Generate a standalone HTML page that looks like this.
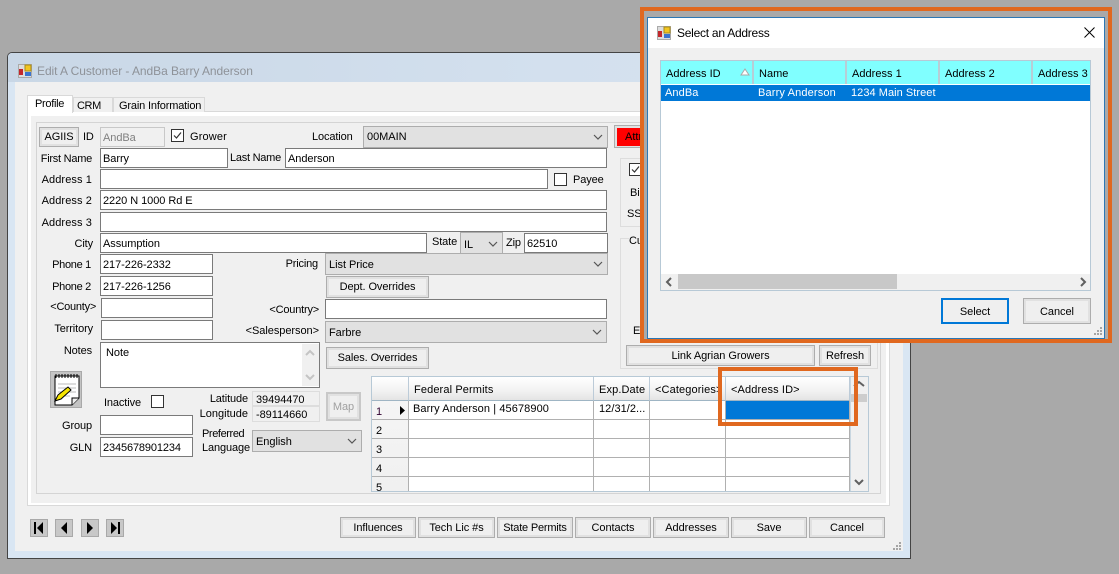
<!DOCTYPE html>
<html><head><meta charset="utf-8"><style>
html,body{margin:0;padding:0;width:1119px;height:574px;overflow:hidden;background:#a9a9a9}
*{box-sizing:border-box}
div,span{position:absolute}
body,div{font:11px "Liberation Sans",sans-serif;color:#000;letter-spacing:0;white-space:nowrap}
.l{line-height:14px;height:14px;margin-top:1px;letter-spacing:-.12px}
.r{text-align:right}
.t{background:#fff;border:1px solid #7a7a7a;padding:3px 0 0 2px;line-height:14px;letter-spacing:-.06px}
.s{background:#e1e1e1;border:1px solid #adadad;padding:4px 0 0 3px;line-height:14px;letter-spacing:-.04px}
.s svg{position:absolute;right:4px;top:7px}
.b{background:#efefef;border:1px solid #adadad;box-shadow:inset 0 0 0 2px #e1e1e1;text-align:center;line-height:21px;letter-spacing:-.06px}
.c{width:13px;height:13px;background:#fff;border:1px solid #333}
.h{background:linear-gradient(#fff,#f2f2f2 60%,#e4e4e4);border-right:1px solid #bccbd8;border-bottom:1px solid #9fb5c4;line-height:27px;padding-left:5px;letter-spacing:.12px}
.rl{background:#b0b0b0;height:1px}
.g{background:#b0b0b0}
.n{background:#c8c8c8;border:1px solid #a9a9a9;width:18px;height:18px;top:519px}
.dh{background:#80ffff;top:61px;height:23px;border-right:2px solid #b7cdd6;line-height:26px;padding-left:5px;letter-spacing:.02px}
</style></head><body>

<div style="left:7px;top:52px;width:904px;height:507px;background:#d9e6f3;border:1px solid #444;border-radius:5px 0 0 0"></div>
<div style="left:8px;top:53px;width:902px;height:29px;background:linear-gradient(90deg,#c9d7e6,#d3e0ee 60%,#d6e3f0);border-radius:4px 0 0 0"></div>
<div style="left:15px;top:82px;width:888px;height:469px;background:#f0f0f0"></div>
<svg style="position:absolute;left:18px;top:64px" width="14" height="14"><rect x=".5" y=".5" width="13" height="13" fill="#ddd" stroke="#aaa"/><rect x="7" y="1" width="6" height="6" fill="#f2c521" stroke="#a88a18"/><rect x="1" y="5" width="4" height="6" fill="#c3272b"/><rect x="7" y="8" width="6" height="4" fill="#3a74cf"/></svg>
<div class="l" style="left:37px;top:63px;color:#8e9298;font-size:12px;letter-spacing:-.06px">Edit A Customer - AndBa Barry Anderson</div>

<div style="left:27px;top:111px;width:863px;height:395px;background:#fff;border:1px solid #d9d9d9"></div>
<div style="left:31px;top:116px;width:855px;height:387px;background:#f0f0f0"></div>
<div style="left:36px;top:122px;width:845px;height:372px;border:1px solid #d4d4d4"></div>
<div style="left:27px;top:95px;width:46px;height:18px;background:#fff;border:1px solid #d9d9d9;border-bottom:0;padding:2px 0 0 7px;letter-spacing:-.3px">Profile</div>
<div style="left:73px;top:97px;width:40px;height:15px;background:#f0f0f0;border:1px solid #d9d9d9;border-bottom:0;padding:0 0 0 3px;line-height:17px;letter-spacing:-.4px">CRM</div>
<div style="left:113px;top:97px;width:92px;height:15px;background:#f0f0f0;border:1px solid #d9d9d9;border-bottom:0;padding:0 0 0 5px;line-height:17px;letter-spacing:-.16px">Grain Information</div>

<div class="b" style="left:39px;top:127px;width:40px;height:20px;line-height:18px">AGIIS</div>
<div class="l" style="left:83px;top:129px">ID</div>
<div class="t" style="left:100px;top:127px;width:65px;height:20px;background:#f0f0f0;border-color:#c8c8c8;color:#808080">AndBa</div>
<div class="c" style="left:171px;top:129px"><svg width="11" height="11" style="position:absolute;left:0;top:0"><path d="M2 5.5l2.5 2.5L9 2.5" fill="none" stroke="#333" stroke-width="1.2"/></svg></div>
<div class="l" style="left:190px;top:129px;letter-spacing:.15px">Grower</div>
<div class="l" style="left:312px;top:129px">Location</div>
<div class="s" style="left:363px;top:126px;width:245px;height:22px;padding-top:3px">00MAIN<svg width="10" height="6"><path d="M1 1l4 4 4-4" fill="none" stroke="#555" stroke-width="1.2"/></svg></div>

<div class="l r" style="left:30px;top:151px;width:62px;letter-spacing:-.25px">First Name</div>
<div class="t" style="left:100px;top:148px;width:128px;height:20px">Barry</div>
<div class="l" style="left:230px;top:150px;letter-spacing:-.25px">Last Name</div>
<div class="t" style="left:285px;top:148px;width:322px;height:20px">Anderson</div>
<div class="l r" style="left:30px;top:172px;width:62px;letter-spacing:.1px">Address 1</div>
<div class="t" style="left:100px;top:169px;width:448px;height:20px"></div>
<div class="c" style="left:554px;top:173px"></div>
<div class="l" style="left:573px;top:172px">Payee</div>
<div class="l r" style="left:30px;top:193px;width:62px;letter-spacing:.1px">Address 2</div>
<div class="t" style="left:100px;top:190px;width:507px;height:20px">2220 N 1000 Rd E</div>
<div class="l r" style="left:30px;top:215px;width:62px;letter-spacing:.1px">Address 3</div>
<div class="t" style="left:100px;top:212px;width:507px;height:20px"></div>
<div class="l r" style="left:30px;top:236px;width:63px">City</div>
<div class="t" style="left:100px;top:233px;width:327px;height:20px">Assumption</div>
<div class="l" style="left:432px;top:234px">State</div>
<div class="s" style="left:460px;top:232px;width:43px;height:22px;padding-top:5px">IL<svg width="10" height="6" style="top:8px"><path d="M1 1l4 4 4-4" fill="none" stroke="#555" stroke-width="1.2"/></svg></div>
<div class="l" style="left:506px;top:235px">Zip</div>
<div class="t" style="left:524px;top:233px;width:84px;height:20px">62510</div>

<div class="l r" style="left:30px;top:257px;width:61px;letter-spacing:-.3px">Phone 1</div>
<div class="t" style="left:100px;top:254px;width:113px;height:20px">217-226-2332</div>
<div class="l r" style="left:30px;top:279px;width:61px;letter-spacing:-.3px">Phone 2</div>
<div class="t" style="left:100px;top:276px;width:113px;height:20px">217-226-1256</div>
<div class="l r" style="left:30px;top:299px;width:66px;letter-spacing:-.25px">&lt;County&gt;</div>
<div class="t" style="left:101px;top:298px;width:112px;height:20px"></div>
<div class="l r" style="left:30px;top:321px;width:63px">Territory</div>
<div class="t" style="left:101px;top:320px;width:112px;height:20px"></div>
<div class="l r" style="left:30px;top:343px;width:62px">Notes</div>
<div class="t" style="left:100px;top:342px;width:220px;height:46px;padding:3px 0 0 5px">Note</div>
<div style="left:302px;top:344px;width:17px;height:42px;background:#f0f0f0"></div>
<svg style="position:absolute;left:305px;top:349px" width="10" height="32"><path d="M1 6l4-4 4 4M1 26l4 4 4-4" fill="none" stroke="#c4c4c4" stroke-width="2"/></svg>

<div style="left:50px;top:371px;width:32px;height:37px;background:#c4c4c4;border:1px solid #a9a9a9"></div>
<svg style="position:absolute;left:52px;top:373px" width="28" height="33"><path d="M3 3h24v22l-7 7H3z" fill="#fff" stroke="#000"/><path d="M4 1v4M7 1v4M10 1v4M13 1v4M16 1v4M19 1v4M22 1v4M25 1v4" stroke="#000"/><path d="M6 11h18M6 15h18M6 19h18M6 23h12" stroke="#bbb"/><path d="M20 32v-7h7" fill="#eee" stroke="#000"/><path d="M3 28l3-6 10-8 3 3-10 9z" fill="#f6e500" stroke="#000"/></svg>

<div class="l" style="left:104px;top:395px">Inactive</div>
<div class="c" style="left:151px;top:395px"></div>
<div class="l r" style="left:190px;top:391px;width:58px">Latitude</div>
<div class="l r" style="left:190px;top:406px;width:58px;letter-spacing:0">Longitude</div>
<div class="t" style="left:252px;top:391px;width:68px;height:15px;background:#f0f0f0;border:1px solid #ddd;padding:0 0 0 3px;line-height:17px">39494470</div>
<div class="t" style="left:252px;top:406px;width:68px;height:16px;background:#f0f0f0;border:1px solid #ddd;padding:0 0 0 3px;line-height:17px">-89114660</div>
<div class="b" style="left:326px;top:392px;width:35px;height:29px;line-height:27px;color:#a0a0a0;border-width:2px;border-color:#c8c8c8">Map</div>
<div class="l r" style="left:40px;top:418px;width:52px">Group</div>
<div class="t" style="left:100px;top:415px;width:93px;height:20px"></div>
<div class="l r" style="left:40px;top:440px;width:52px">GLN</div>
<div class="t" style="left:100px;top:437px;width:93px;height:20px;letter-spacing:-.13px">2345678901234</div>
<div class="l" style="left:202px;top:426px;letter-spacing:-.4px">Preferred</div>
<div class="l" style="left:202px;top:440px">Language</div>
<div class="s" style="left:252px;top:430px;width:110px;height:22px">English<svg width="10" height="6"><path d="M1 1l4 4 4-4" fill="none" stroke="#555" stroke-width="1.2"/></svg></div>

<div class="b" style="left:326px;top:276px;width:103px;height:22px;letter-spacing:-.08px">Dept. Overrides</div>
<div class="l r" style="left:240px;top:256px;width:78px;letter-spacing:-.18px">Pricing</div>
<div class="s" style="left:325px;top:253px;width:283px;height:22px">List Price<svg width="10" height="6"><path d="M1 1l4 4 4-4" fill="none" stroke="#555" stroke-width="1.2"/></svg></div>
<div class="l r" style="left:240px;top:302px;width:79px;letter-spacing:-.2px">&lt;Country&gt;</div>
<div class="t" style="left:325px;top:299px;width:282px;height:20px"></div>
<div class="l r" style="left:230px;top:323px;width:89px;letter-spacing:-.05px">&lt;Salesperson&gt;</div>
<div class="s" style="left:325px;top:321px;width:282px;height:22px">Farbre<svg width="10" height="6"><path d="M1 1l4 4 4-4" fill="none" stroke="#555" stroke-width="1.2"/></svg></div>
<div class="b" style="left:326px;top:347px;width:103px;height:22px;letter-spacing:-.1px">Sales. Overrides</div>

<!-- right side -->
<div style="left:614px;top:125px;width:40px;height:23px;background:#e1e1e1;border:1px solid #adadad"></div>
<div style="left:617px;top:128px;width:40px;height:18px;background:#f00;line-height:18px;padding-left:8px">Attn</div>
<div style="left:620px;top:158px;width:30px;height:69px;border:1px solid #ddd;border-right:0"></div>
<div class="c" style="left:629px;top:163px"><svg width="11" height="11" style="position:absolute;left:0;top:0"><path d="M2 5.5l2.5 2.5L9 2.5" fill="none" stroke="#333" stroke-width="1.2"/></svg></div>
<div class="l" style="left:630px;top:185px">Birth</div>
<div class="l" style="left:627px;top:206px">SSN</div>
<div style="left:620px;top:238px;width:258px;height:131px;border:1px solid #ddd"></div>
<div class="l" style="left:629px;top:233px;background:#f0f0f0">Cust</div>
<div class="l" style="left:633px;top:323px">Em</div>
<div class="b" style="left:626px;top:345px;width:189px;height:21px;line-height:20px;letter-spacing:-.05px">Link Agrian Growers</div>
<div class="b" style="left:819px;top:345px;width:52px;height:21px;line-height:20px">Refresh</div>

<!-- grid -->
<div style="left:371px;top:376px;width:498px;height:116px;background:#fff;border:1px solid #b7c9d6"></div>
<div class="h" style="left:372px;top:377px;width:37px;height:24px"></div>
<div class="h" style="left:409px;top:377px;width:185px;height:24px">Federal Permits</div>
<div class="h" style="left:594px;top:377px;width:56px;height:24px">Exp.Date</div>
<div class="h" style="left:650px;top:377px;width:76px;height:24px;overflow:hidden">&lt;Categories&gt;</div>
<div class="h" style="left:726px;top:377px;width:124px;height:24px">&lt;Address ID&gt;</div>
<div style="left:372px;top:401px;width:37px;height:90px;background:linear-gradient(#f5f5f5,#f0f0f0)"></div>
<div class="l" style="left:376px;top:404px;color:#300030">1</div>
<div class="l" style="left:376px;top:423px">2</div>
<div class="l" style="left:376px;top:442px">3</div>
<div class="l" style="left:376px;top:461px">4</div>
<div class="l" style="left:376px;top:480px">5</div>
<svg style="position:absolute;left:399px;top:405px" width="7" height="11"><path d="M1 1l5 4.5L1 10z" fill="#000"/></svg>
<div class="rl" style="left:372px;top:419px;width:478px"></div>
<div class="rl" style="left:372px;top:438px;width:478px"></div>
<div class="rl" style="left:372px;top:457px;width:478px"></div>
<div class="rl" style="left:372px;top:476px;width:478px"></div>
<div class="g" style="left:408px;top:401px;width:1px;height:90px"></div>
<div class="g" style="left:593px;top:401px;width:1px;height:90px"></div>
<div class="g" style="left:649px;top:401px;width:1px;height:90px"></div>
<div class="g" style="left:725px;top:401px;width:1px;height:90px"></div>
<div class="g" style="left:849px;top:401px;width:1px;height:90px"></div>
<div class="l" style="left:413px;top:401px;letter-spacing:.09px">Barry Anderson | 45678900</div>
<div class="l" style="left:599px;top:401px;letter-spacing:.05px">12/31/2...</div>
<div style="left:726px;top:401px;width:123px;height:18px;background:#0078d7"></div>
<div style="left:850px;top:377px;width:18px;height:114px;background:#f0f0f0;border-left:1px solid #c8d6e0"></div>
<div style="left:851px;top:394px;width:16px;height:8px;background:#cdcdcd"></div>
<svg style="position:absolute;left:853px;top:380px" width="12" height="108"><path d="M1 6l5-4 5 4M2 100l4 4 4-4" fill="none" stroke="#606060" stroke-width="2"/></svg>

<!-- bottom buttons -->
<div class="n" style="left:30px"></div>
<svg style="position:absolute;left:33px;top:521px" width="12" height="14"><path d="M1 1h2v12H1zM10 1v12L4 7z" fill="#000"/></svg>
<div class="n" style="left:55px"></div>
<svg style="position:absolute;left:58px;top:521px" width="12" height="14"><path d="M9 1v12L3 7z" fill="#000"/></svg>
<div class="n" style="left:81px"></div>
<svg style="position:absolute;left:84px;top:521px" width="12" height="14"><path d="M3 1v12l6-6z" fill="#000"/></svg>
<div class="n" style="left:106px"></div>
<svg style="position:absolute;left:109px;top:521px" width="12" height="14"><path d="M2 1v12l6-6zM9 1h2v12H9z" fill="#000"/></svg>
<div class="b" style="left:340px;top:517px;width:76px;height:21px;letter-spacing:-.1px">Influences</div>
<div class="b" style="left:418px;top:517px;width:77px;height:21px">Tech Lic #s</div>
<div class="b" style="left:497px;top:517px;width:76px;height:21px;letter-spacing:-.2px">State Permits</div>
<div class="b" style="left:575px;top:517px;width:76px;height:21px">Contacts</div>
<div class="b" style="left:653px;top:517px;width:76px;height:21px">Addresses</div>
<div class="b" style="left:731px;top:517px;width:76px;height:21px">Save</div>
<div class="b" style="left:809px;top:517px;width:76px;height:21px">Cancel</div>
<svg style="position:absolute;left:892px;top:541px" width="10" height="10" fill="#a5a5a5"><rect x="7" y="1" width="2" height="2"/><rect x="4" y="4" width="2" height="2"/><rect x="7" y="4" width="2" height="2"/><rect x="1" y="7" width="2" height="2"/><rect x="4" y="7" width="2" height="2"/><rect x="7" y="7" width="2" height="2"/></svg>

<!-- small orange -->
<div style="left:718px;top:367px;width:140px;height:59px;border:4px solid #e0681f"></div>

<!-- dialog -->
<div style="left:644px;top:11px;width:464px;height:328px;background:#a9a9a9"></div>
<div style="left:647px;top:17px;width:458px;height:322px;background:#f0f0f0;border:1px solid #2a77b5"></div>
<div style="left:648px;top:18px;width:456px;height:30px;background:#fff"></div>
<svg style="position:absolute;left:657px;top:26px" width="14" height="14"><rect x=".5" y=".5" width="13" height="13" fill="#ddd" stroke="#aaa"/><rect x="7" y="1" width="6" height="6" fill="#f2c521" stroke="#a88a18"/><rect x="1" y="5" width="4" height="6" fill="#c3272b"/><rect x="7" y="8" width="6" height="4" fill="#3a74cf"/></svg>
<div class="l" style="left:677px;top:25px;font-size:12px;letter-spacing:-.25px">Select an Address</div>
<svg style="position:absolute;left:1084px;top:27px" width="11" height="11"><path d="M.5.5l10 10M10.5.5l-10 10" stroke="#000" stroke-width="1"/></svg>
<div style="left:660px;top:60px;width:431px;height:231px;background:#fff;border:1px solid #b7c9d6"></div>
<div class="dh" style="left:661px;width:93px">Address ID</div>
<svg style="position:absolute;left:740px;top:68px" width="10" height="8"><path d="M5 1l4 6H1z" fill="#fff" stroke="#aaa"/></svg>
<div class="dh" style="left:754px;width:93px">Name</div>
<div class="dh" style="left:847px;width:93px">Address 1</div>
<div class="dh" style="left:940px;width:93px">Address 2</div>
<div class="dh" style="left:1033px;width:57px;border-right:0;overflow:hidden">Address 3</div>
<div style="left:661px;top:85px;width:429px;height:16px;background:#0078d7"></div>
<div class="l" style="left:665px;top:85px;color:#fff;letter-spacing:.1px">AndBa</div>
<div class="l" style="left:758px;top:85px;color:#fff;letter-spacing:.15px">Barry Anderson</div>
<div class="l" style="left:851px;top:85px;color:#fff;letter-spacing:.05px">1234 Main Street</div>
<div style="left:661px;top:274px;width:429px;height:16px;background:#f0f0f0"></div>
<div style="left:678px;top:274px;width:219px;height:15px;background:#c8c8c8"></div>
<svg style="position:absolute;left:665px;top:277px" width="8" height="10"><path d="M6 1L2 5l4 4" fill="none" stroke="#606060" stroke-width="2"/></svg>
<svg style="position:absolute;left:1079px;top:277px" width="8" height="10"><path d="M2 1l4 4-4 4" fill="none" stroke="#606060" stroke-width="2"/></svg>
<div class="b" style="left:941px;top:298px;width:68px;height:26px;border:2px solid #0078d7;box-shadow:none;line-height:25px">Select</div>
<div class="b" style="left:1023px;top:298px;width:68px;height:26px;line-height:26px">Cancel</div>
<svg style="position:absolute;left:1093px;top:326px" width="10" height="10" fill="#a5a5a5"><rect x="7" y="1" width="2" height="2"/><rect x="4" y="4" width="2" height="2"/><rect x="7" y="4" width="2" height="2"/><rect x="1" y="7" width="2" height="2"/><rect x="4" y="7" width="2" height="2"/><rect x="7" y="7" width="2" height="2"/></svg>
<div style="left:640px;top:7px;width:472px;height:336px;border:4px solid #e0681f"></div>
</body></html>
